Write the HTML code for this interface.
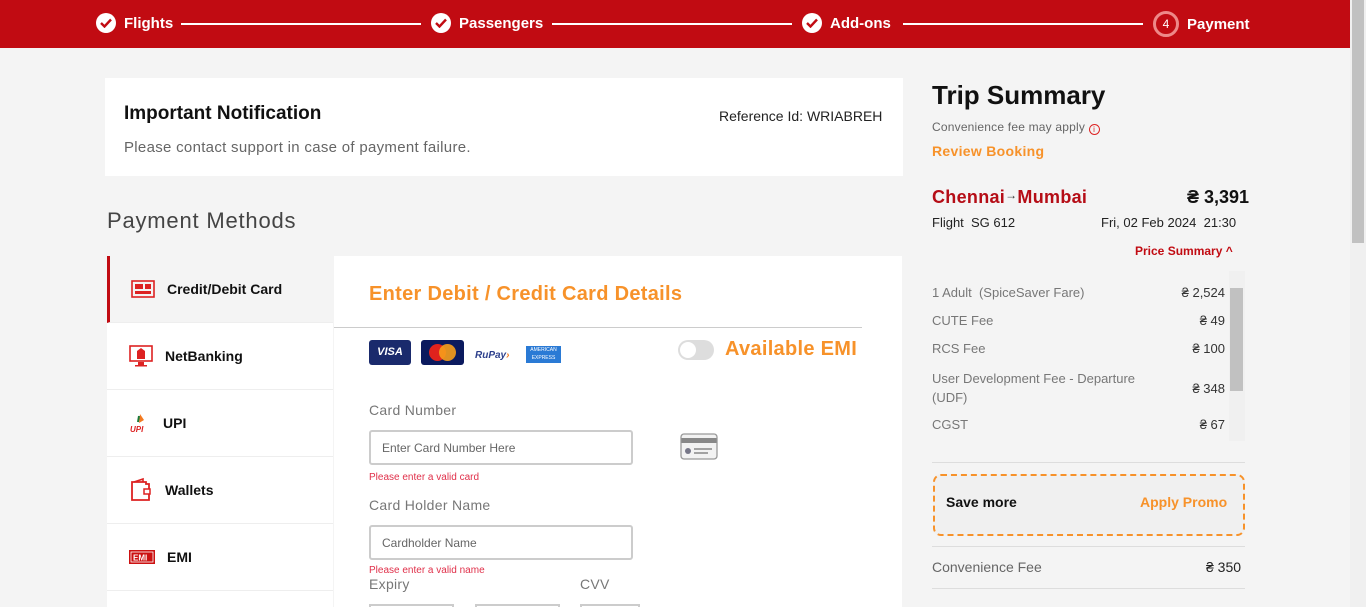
<!DOCTYPE html>
<html style="width:1366px;height:607px;overflow:hidden"><head><meta charset="utf-8"><style>
*{box-sizing:border-box;margin:0;padding:0}
body{width:1366px;height:607px;overflow:hidden;background:#f4f4f4;font-family:"Liberation Sans",sans-serif;color:#222;position:relative}
.hdr{position:absolute;left:0;top:0;width:1350px;height:48px;background:#c10b12}
.step{position:absolute;top:13px;display:flex;align-items:center;color:#fff;font-weight:bold;font-size:15px}
.ck{width:20px;height:20px;border-radius:50%;background:#fff;margin-right:8px;display:flex;align-items:center;justify-content:center}
.line{position:absolute;top:23px;height:1.5px;background:#fff}
.abs{position:absolute}
.card{background:#fff}
.mi{position:absolute;left:107px;width:226px;height:67px;background:#fff;border-bottom:1px solid #eee;display:flex;align-items:center;padding-left:22px;font-size:14px;font-weight:bold;color:#111}
.mi svg{margin-right:12px}
.inp{position:absolute;left:369px;width:264px;height:35px;border:2px solid #ccc;border-radius:3px;font-size:12px;color:#666;padding:9px 11px}
.lbl{position:absolute;left:369px;font-size:14px;color:#777;letter-spacing:.3px}
.err{position:absolute;left:369px;font-size:10px;color:#e0304a}
.row{position:absolute;left:932px;width:293px;display:flex;justify-content:space-between;font-size:13px;color:#777}
.row b{font-weight:normal;color:#333}
</style></head><body>
<div class="hdr">
 <div class="step" style="left:96px"><div class="ck"><svg width="12" height="10"><path d="M1 5l3.5 3.5L11 1.5" stroke="#c10b12" stroke-width="2.4" fill="none"/></svg></div>Flights</div>
 <div class="line" style="left:181px;width:240px"></div>
 <div class="step" style="left:431px"><div class="ck"><svg width="12" height="10"><path d="M1 5l3.5 3.5L11 1.5" stroke="#c10b12" stroke-width="2.4" fill="none"/></svg></div>Passengers</div>
 <div class="line" style="left:552px;width:240px"></div>
 <div class="step" style="left:802px"><div class="ck"><svg width="12" height="10"><path d="M1 5l3.5 3.5L11 1.5" stroke="#c10b12" stroke-width="2.4" fill="none"/></svg></div>Add-ons</div>
 <div class="line" style="left:903px;width:240px"></div>
 <div class="step" style="left:1153px;top:11px"><div class="ck" style="width:26px;height:26px;border:3px solid #e88;background:#c10b12;color:#fff;font-size:12px;font-weight:normal">4</div>Payment</div>
</div>
<div style="position:absolute;left:1350px;top:0;width:16px;height:607px;background:#f0f0f0"><div style="position:absolute;left:2px;top:0;width:12px;height:243px;background:#c1c1c1"></div></div>

<div class="abs card" style="left:105px;top:78px;width:798px;height:98px"></div>
<div class="abs" style="left:124px;top:103px;font-size:19px;font-weight:bold;color:#111">Important Notification</div>
<div class="abs" style="left:719px;top:108px;font-size:14px;color:#222">Reference Id: WRIABREH</div>
<div class="abs" style="left:124px;top:139px;font-size:15px;color:#666;letter-spacing:.3px">Please contact support in case of payment failure.</div>
<div class="abs" style="left:107px;top:208px;font-size:22px;color:#444;letter-spacing:.8px">Payment Methods</div>

<div class="mi" style="top:256px;background:#f4f4f4;border-left:3px solid #c10b12;padding-left:21px"><svg width="24" height="18"><rect x="1" y="1" width="22" height="16" fill="none" stroke="#d22" stroke-width="1.6"/><rect x="4" y="4" width="8" height="5" fill="#d22"/><rect x="14" y="4" width="6" height="5" fill="#d22"/><rect x="4" y="11" width="16" height="3" fill="#d22"/></svg>Credit/Debit Card</div>
<div class="mi" style="top:323px"><svg width="24" height="22"><rect x="1" y="1" width="22" height="15" fill="none" stroke="#d22" stroke-width="1.6"/><path d="M8 14V6l4-3 4 3v8z" fill="#d22"/><rect x="9" y="17" width="6" height="3" fill="#d22"/><rect x="6" y="20" width="12" height="1.5" fill="#d22"/></svg>NetBanking</div>
<div class="mi" style="top:390px"><svg width="22" height="20"><path d="M11 1l4 6-5 3z" fill="#f47a20"/><path d="M10 3l-1 6" stroke="#197a3a" stroke-width="2"/><text x="1" y="19" font-size="8" fill="#d22" font-style="italic" font-family="Liberation Sans">UPI</text></svg>UPI</div>
<div class="mi" style="top:457px"><svg width="24" height="26"><path d="M3 5h14v2h3v16H3z" fill="none" stroke="#d22" stroke-width="1.8"/><path d="M5 5l9-3v3" fill="none" stroke="#d22" stroke-width="1.6"/><rect x="15" y="12" width="6" height="5" fill="#fff" stroke="#d22" stroke-width="1.5"/></svg>Wallets</div>
<div class="mi" style="top:524px"><svg width="26" height="14"><rect x="0" y="0" width="26" height="14" fill="#c11"/><rect x="2" y="2" width="22" height="10" fill="none" stroke="#fff" stroke-width=".8"/><text x="4" y="10.5" font-size="8" font-weight="bold" fill="#fff" font-family="Liberation Sans">EMI</text></svg>EMI</div>
<div class="mi" style="top:591px;height:16px;border-bottom:none"></div>

<div class="abs card" style="left:334px;top:256px;width:568px;height:351px"></div>
<div class="abs" style="left:369px;top:283px;font-size:20px;font-weight:bold;color:#f7922a;letter-spacing:.3px">Enter Debit / Credit Card Details</div>
<div class="abs" style="left:334px;top:327px;width:528px;height:1px;background:#ccc"></div>
<div class="abs" style="left:369px;top:340px;width:42px;height:25px;background:#1a2a6c;border-radius:3px;color:#fff;font-size:11px;font-weight:bold;font-style:italic;text-align:center;line-height:25px">VISA</div>
<div class="abs" style="left:421px;top:340px;width:43px;height:25px;background:#0b1a5e;border-radius:3px"><div class="abs" style="left:8px;top:4px;width:17px;height:17px;border-radius:50%;background:#e0231d"></div><div class="abs" style="left:18px;top:4px;width:17px;height:17px;border-radius:50%;background:#f79e1b;opacity:.9"></div></div>
<div class="abs" style="left:475px;top:350px;font-size:10px;font-weight:bold;font-style:italic;color:#2c3f8c">RuPay<span style="color:#f47a20">›</span></div>
<div class="abs" style="left:526px;top:346px;width:35px;height:17px;background:#2a7ad5;color:#fff;font-size:5px;text-align:center;line-height:8px">AMERICAN<br>EXPRESS</div>
<div class="abs" style="left:678px;top:340px;width:36px;height:20px;border-radius:10px;background:#ddd"><div class="abs" style="left:2px;top:2px;width:16px;height:16px;border-radius:50%;background:#fff"></div></div>
<div class="abs" style="left:725px;top:338px;font-size:20px;font-weight:bold;color:#f7922a;letter-spacing:.3px">Available EMI</div>

<div class="lbl" style="top:402px">Card Number</div>
<div class="inp" style="top:430px">Enter Card Number Here</div>
<div class="err" style="top:472px">Please enter a valid card</div>
<svg class="abs" style="left:680px;top:433px" width="38" height="27"><rect x="1" y="1" width="36" height="25" rx="3" fill="#f2f2f2" stroke="#999" stroke-width="1.3"/><rect x="1.5" y="5" width="35" height="5" fill="#888"/><circle cx="8" cy="18" r="3" fill="#778"/><path d="M14 16h18M14 20h14" stroke="#888" stroke-width="1.5"/></svg>
<div class="lbl" style="top:497px">Card Holder Name</div>
<div class="inp" style="top:525px">Cardholder Name</div>
<div class="err" style="top:565px">Please enter a valid name</div>
<div class="lbl" style="top:576px">Expiry</div>
<div class="lbl" style="top:576px;left:580px">CVV</div>
<div class="abs" style="left:369px;top:604px;width:85px;height:3px;border:2px solid #ccc;border-bottom:none"></div>
<div class="abs" style="left:475px;top:604px;width:85px;height:3px;border:2px solid #ccc;border-bottom:none"></div>
<div class="abs" style="left:580px;top:604px;width:60px;height:3px;border:2px solid #ccc;border-bottom:none"></div>

<div class="abs" style="left:932px;top:80px;font-size:26px;font-weight:bold;color:#111">Trip Summary</div>
<div class="abs" style="left:932px;top:120px;font-size:12px;color:#666;letter-spacing:.2px">Convenience fee may apply <span style="display:inline-block;width:11px;height:11px;border:1.3px solid #d22;border-radius:50%;color:#d22;font-size:8px;text-align:center;line-height:9px;vertical-align:-1px">i</span></div>
<div class="abs" style="left:932px;top:143px;font-size:14px;font-weight:bold;color:#f7922a;letter-spacing:.3px">Review Booking</div>
<div class="abs" style="left:932px;top:187px;font-size:18px;font-weight:bold;color:#b50d16;letter-spacing:.3px">Chennai<span style="font-size:12px;color:#333;vertical-align:4px">→</span>Mumbai</div>
<div class="abs" style="left:1187px;top:187px;font-size:18px;font-weight:bold;color:#111">₴ 3,391</div>
<div class="abs" style="left:932px;top:215px;font-size:13px;color:#222">Flight&nbsp; SG 612</div>
<div class="abs" style="left:1101px;top:215px;font-size:13px;color:#222">Fri, 02 Feb 2024&nbsp; 21:30</div>
<div class="abs" style="left:1135px;top:244px;font-size:12px;font-weight:bold;color:#c10b12">Price Summary ^</div>
<div class="abs" style="left:1229px;top:271px;width:16px;height:170px;background:#f0f0f0"><div class="abs" style="left:1px;top:17px;width:13px;height:103px;background:#c1c1c1"></div></div>
<div class="row" style="top:285px"><span>1 Adult&nbsp; (SpiceSaver Fare)</span><b>₴ 2,524</b></div>
<div class="row" style="top:313px"><span>CUTE Fee</span><b>₴ 49</b></div>
<div class="row" style="top:341px"><span>RCS Fee</span><b>₴ 100</b></div>
<div class="row" style="top:369px;align-items:center"><span style="line-height:19px">User Development Fee - Departure<br>(UDF)</span><b>₴ 348</b></div>
<div class="row" style="top:417px"><span>CGST</span><b>₴ 67</b></div>
<div class="abs" style="left:932px;top:462px;width:313px;height:1px;background:#ddd"></div>
<div class="abs" style="left:933px;top:474px;width:312px;height:62px;border:2.5px dashed #f7922a;border-radius:8px;background:#f0f0f0"></div>
<div class="abs" style="left:946px;top:494px;font-size:14px;font-weight:bold;color:#111">Save more</div>
<div class="abs" style="left:1140px;top:494px;font-size:14px;font-weight:bold;color:#f7922a">Apply Promo</div>
<div class="abs" style="left:932px;top:546px;width:313px;height:1px;background:#ddd"></div>
<div class="abs" style="left:932px;top:559px;font-size:14px;color:#666">Convenience Fee</div>
<div class="abs" style="left:1206px;top:559px;font-size:14px;color:#222">₴ 350</div>
<div class="abs" style="left:932px;top:588px;width:313px;height:1px;background:#ddd"></div>
</body></html>
